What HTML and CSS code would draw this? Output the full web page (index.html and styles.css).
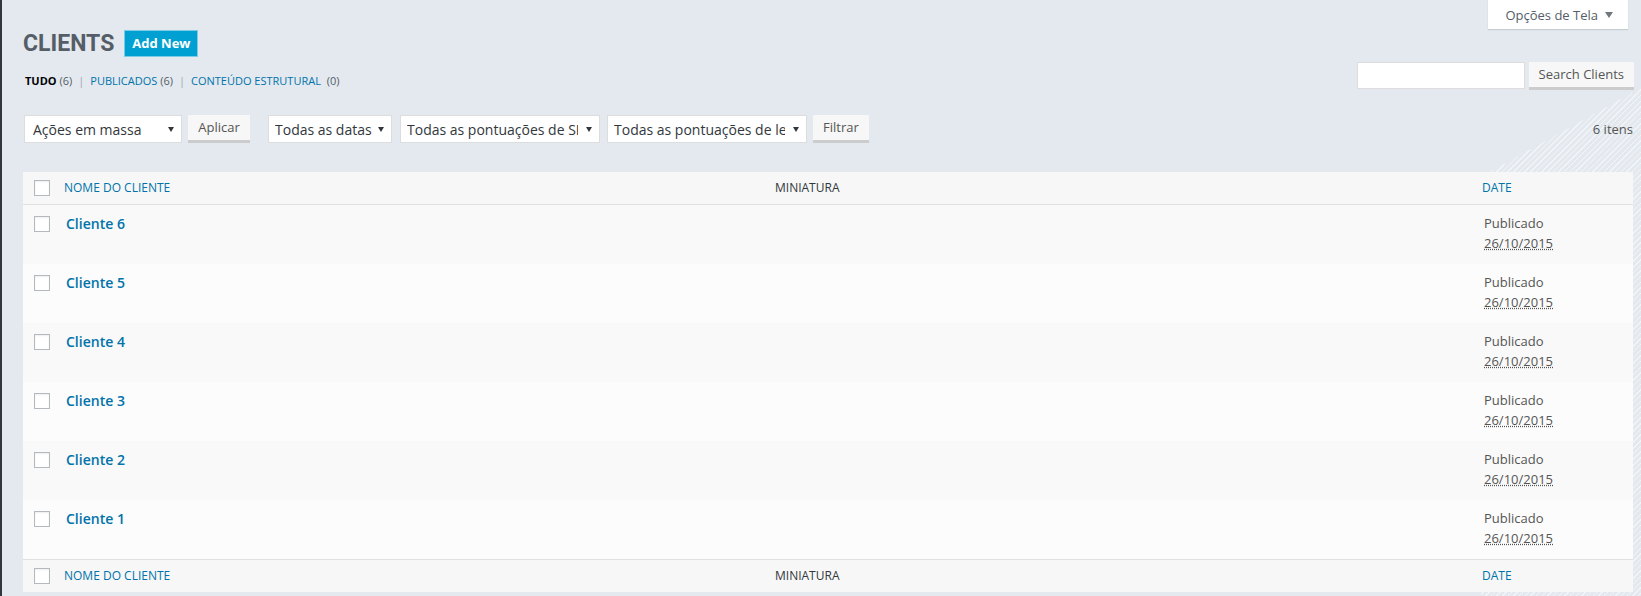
FILE: index.html
```html
<!DOCTYPE html>
<html lang="pt-BR">
<head>
    <meta charset="UTF-8">
    <meta name="viewport" content="width=device-width, initial-scale=1.0">
    <title>Clients</title>
    <link rel="stylesheet" href="styles.css">
</head>
<body>

    <div class="wrap">
        <div class="top-bar">
            <div class="title-group">
                <h1 class="page-title">CLIENTS</h1>
                <a class="add-new" href="#">Add New</a>
            </div>
            <button class="screen-options">Opções de Tela <span class="tab-arrow"></span></button>
        </div>

        <div class="views-bar">
            <ul class="subsubsub">
                <li class="current">TUDO <span class="count">(6)</span></li>
                <li class="sep">|</li>
                <li><a href="#">PUBLICADOS</a> <span class="count">(6)</span></li>
                <li class="sep">|</li>
                <li><a href="#">CONTEÚDO ESTRUTURAL</a> <span class="count count-wide">(0)</span></li>
            </ul>
            <form class="search-box">
                <input type="search" class="search-input">
                <button type="button" class="button">Search Clients</button>
            </form>
        </div>

        <div class="tablenav">
            <div class="actions">
                <div class="select select-bulk"><span class="select-text">Ações em massa</span></div>
                <button class="button apply">Aplicar</button>
                <div class="select select-dates"><span class="select-text">Todas as datas</span></div>
                <div class="select select-wide"><span class="select-text">Todas as pontuações de SEO</span></div>
                <div class="select select-wide"><span class="select-text">Todas as pontuações de legibilidade</span></div>
                <button class="button">Filtrar</button>
            </div>
            <div class="num-items">6 itens</div>
        </div>

        <table class="list-table">
            <colgroup>
                <col class="col-check">
                <col class="col-name">
                <col class="col-thumb">
                <col class="col-date">
            </colgroup>
            <thead>
                <tr>
                    <th class="check-column"><input type="checkbox"></th>
                    <th><a href="#">NOME DO CLIENTE</a></th>
                    <th>MINIATURA</th>
                    <th><a href="#">DATE</a></th>
                </tr>
            </thead>
            <tbody>
                <tr>
                    <td class="check-column"><input type="checkbox"></td>
                    <td class="title"><a href="#">Cliente 6</a></td>
                    <td></td>
                    <td class="date">Publicado<br><abbr title="26/10/2015">26/10/2015</abbr></td>
                </tr>
                <tr>
                    <td class="check-column"><input type="checkbox"></td>
                    <td class="title"><a href="#">Cliente 5</a></td>
                    <td></td>
                    <td class="date">Publicado<br><abbr title="26/10/2015">26/10/2015</abbr></td>
                </tr>
                <tr>
                    <td class="check-column"><input type="checkbox"></td>
                    <td class="title"><a href="#">Cliente 4</a></td>
                    <td></td>
                    <td class="date">Publicado<br><abbr title="26/10/2015">26/10/2015</abbr></td>
                </tr>
                <tr>
                    <td class="check-column"><input type="checkbox"></td>
                    <td class="title"><a href="#">Cliente 3</a></td>
                    <td></td>
                    <td class="date">Publicado<br><abbr title="26/10/2015">26/10/2015</abbr></td>
                </tr>
                <tr>
                    <td class="check-column"><input type="checkbox"></td>
                    <td class="title"><a href="#">Cliente 2</a></td>
                    <td></td>
                    <td class="date">Publicado<br><abbr title="26/10/2015">26/10/2015</abbr></td>
                </tr>
                <tr>
                    <td class="check-column"><input type="checkbox"></td>
                    <td class="title"><a href="#">Cliente 1</a></td>
                    <td></td>
                    <td class="date">Publicado<br><abbr title="26/10/2015">26/10/2015</abbr></td>
                </tr>
            </tbody>
            <tfoot>
                <tr>
                    <th class="check-column"><input type="checkbox"></th>
                    <th><a href="#">NOME DO CLIENTE</a></th>
                    <th>MINIATURA</th>
                    <th><a href="#">DATE</a></th>
                </tr>
            </tfoot>
        </table>
    </div>

</body>
</html>
```

FILE: styles.css
```css
html {
    height: 100%;
}
body {
    margin: 0;
    min-height: 100%;
    border-left: 2px solid #32373c;
    font-family: "Open Sans", "Liberation Sans", sans-serif;
    font-size: 13px;
    color: #555;
    background-color: #e3e9ef;
    background-image:
        linear-gradient(151deg, #e3e9ef 25.8%, rgba(227, 233, 239, 0) 25.8%),
        repeating-linear-gradient(135deg, rgba(255, 255, 255, 0.55) 0 1px, transparent 1px 4px);
    background-size: 160px 100%;
    background-position: right top;
    background-repeat: no-repeat;
}
a {
    color: #0073aa;
    text-decoration: none;
}
.wrap {
    padding: 0 8px 0 21px;
}

/* header */
.top-bar {
    display: flex;
    justify-content: space-between;
    align-items: flex-start;
}
.title-group {
    display: flex;
    align-items: center;
    gap: 10px;
    margin-top: 30px;
}
.page-title {
    margin: 0;
    font-family: Roboto, "Liberation Sans", sans-serif;
    font-size: 23px;
    font-weight: 700;
    line-height: 27px;
    color: #555d66;
}
.add-new {
    display: block;
    height: 25px;
    line-height: 25px;
    padding: 0 7px;
    border: 1px solid #7ccbe5;
    background-color: #00a0d2;
    color: #fff;
    font-weight: 700;
    font-size: 13px;
}
.screen-options {
    display: flex;
    align-items: center;
    height: 29px;
    margin-right: 5px;
    padding: 0 15px 0 17px;
    border: none;
    background-color: #fff;
    box-shadow: 0 1px 1px rgba(0, 0, 0, 0.12);
    font: inherit;
    font-size: 13px;
    color: #555d66;
}
.tab-arrow {
    margin-left: 7px;
    border-left: 4px solid transparent;
    border-right: 4px solid transparent;
    border-top: 6px solid #72777c;
}

/* views + search */
.views-bar {
    display: flex;
    justify-content: space-between;
    align-items: flex-start;
    margin-top: 5px;
}
.subsubsub {
    display: flex;
    margin: 11px 0 0 2px;
    padding: 0;
    list-style: none;
    font-size: 11px;
    line-height: 16px;
    color: #555d66;
}
.subsubsub .current {
    color: #000;
    font-weight: 700;
}
.subsubsub .count {
    font-weight: 400;
    color: #555d66;
}
.subsubsub .count-wide {
    margin-left: 3px;
}
.subsubsub .sep {
    margin: 0 6px;
    color: #a0a5aa;
}
.search-box {
    display: flex;
    gap: 4px;
    margin: 0 -1px 0 0;
}
.search-input {
    box-sizing: border-box;
    width: 168px;
    height: 27px;
    margin: 0;
    border: 1px solid #ddd;
    background-color: #fff;
}
.button {
    box-sizing: border-box;
    height: 28px;
    padding: 0 10px;
    border: none;
    border-bottom: 3px solid #ccc;
    background-color: #f7f7f7;
    font: inherit;
    font-size: 13px;
    line-height: 25px;
    color: #555;
    cursor: pointer;
}

/* filters */
.tablenav {
    display: flex;
    justify-content: space-between;
    align-items: flex-start;
    margin-top: 25px;
}
.actions {
    display: flex;
    align-items: flex-start;
    margin-left: 1px;
}
.select {
    box-sizing: border-box;
    display: flex;
    align-items: center;
    height: 28px;
    padding: 0 7px 0 6px;
    border: 1px solid #ddd;
    background-color: #fff;
    font-size: 14px;
    color: #32373c;
    margin-right: 7px;
}
.select::after {
    content: "";
    flex-shrink: 0;
    border-left: 3px solid transparent;
    border-right: 3px solid transparent;
    border-top: 5px solid #32373c;
}
.select-text {
    flex: 1;
    margin-right: 8px;
    white-space: nowrap;
    overflow: hidden;
}
.select-bulk {
    width: 158px;
    padding-left: 8px;
    margin-right: 6px;
}
.select-dates {
    width: 124px;
    margin-right: 8px;
}
.select-dates .select-text {
    margin-right: 5px;
}
.select-wide {
    width: 200px;
}
.select-wide + .button {
    margin-left: -1px;
}
.apply {
    width: 62px;
    margin-right: 18px;
}
.num-items {
    line-height: 28px;
    color: #555;
}

/* table */
.list-table {
    width: 100%;
    margin-top: 29px;
    table-layout: fixed;
    border-collapse: separate;
    border-spacing: 0;
}
.col-check {
    width: 31px;
}
.col-name {
    width: 711px;
}
.col-thumb {
    width: 707px;
}
.list-table th {
    height: 16px;
    padding: 8px 10px;
    vertical-align: top;
    background-color: #f7f7f7;
    text-align: left;
    font-weight: 400;
    font-size: 12px;
    line-height: 16px;
    color: #32373c;
}
.list-table thead th {
    border-bottom: 1px solid #e1e1e1;
}
.list-table tfoot th {
    border-top: 1px solid #e1e1e1;
}
.list-table td {
    height: 39px;
    padding: 9px 10px 11px;
    vertical-align: top;
    line-height: 19.5px;
    background-color: #fcfcfc;
}
.list-table tbody tr:nth-child(odd) td {
    background-color: #f9f9f9;
}
.list-table .check-column {
    padding: 8px 0 8px 11px;
}
.list-table td.check-column {
    padding-top: 11px;
    padding-bottom: 0;
    height: 48px;
}
.check-column input {
    appearance: none;
    display: block;
    width: 16px;
    height: 16px;
    margin: 0;
    border: 1px solid #b4b9be;
    background-color: #fff;
    box-shadow: inset 0 1px 2px rgba(0, 0, 0, 0.07);
}
.title {
    padding-left: 12px !important;
}
.title a {
    font-size: 14px;
    font-weight: 600;
}
.date {
    padding-left: 12px !important;
    color: #555;
}
.date abbr {
    text-decoration: underline dotted;
}
```
